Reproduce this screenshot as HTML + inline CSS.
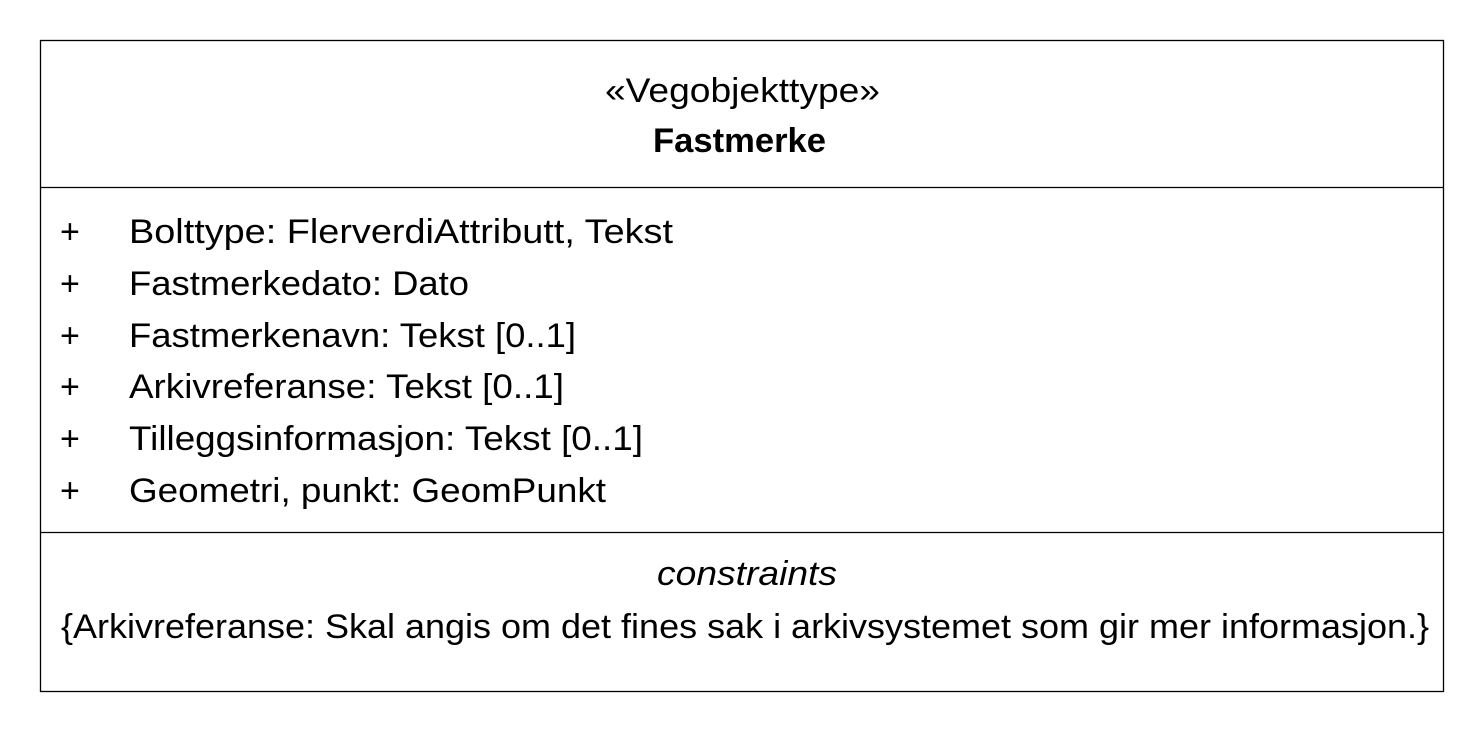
<!DOCTYPE html>
<html><head><meta charset="utf-8"><style>
html,body{margin:0;padding:0;background:#fff;width:1484px;height:732px;overflow:hidden}
svg{display:block}
text{font-family:"Liberation Sans",sans-serif;font-size:34px;fill:#000}
</style></head><body>
<svg width="1484" height="732" viewBox="0 0 1484 732">
<rect x="40.5" y="40.5" width="1403" height="651" fill="#fff" stroke="#000" stroke-width="1.3"/>
<line x1="40" y1="187.5" x2="1443" y2="187.5" stroke="#000" stroke-width="1.3"/>
<line x1="40" y1="532.5" x2="1443" y2="532.5" stroke="#000" stroke-width="1.3"/>
<text x="605" y="102" textLength="275" lengthAdjust="spacingAndGlyphs">«Vegobjekttype»</text>
<text x="653" y="152" textLength="173" lengthAdjust="spacingAndGlyphs" font-weight="bold">Fastmerke</text>
<g>
<text x="60" y="243" font-size="34">+</text><text x="129" y="243" textLength="544" lengthAdjust="spacingAndGlyphs">Bolttype: FlerverdiAttributt, Tekst</text>
<text x="60" y="295">+</text><text x="129" y="295" textLength="340" lengthAdjust="spacingAndGlyphs">Fastmerkedato: Dato</text>
<text x="60" y="347">+</text><text x="129" y="347" textLength="447" lengthAdjust="spacingAndGlyphs">Fastmerkenavn: Tekst [0..1]</text>
<text x="60" y="398">+</text><text x="129" y="398" textLength="435" lengthAdjust="spacingAndGlyphs">Arkivreferanse: Tekst [0..1]</text>
<text x="60" y="450">+</text><text x="129" y="450" textLength="514" lengthAdjust="spacingAndGlyphs">Tilleggsinformasjon: Tekst [0..1]</text>
<text x="60" y="502">+</text><text x="129" y="502" textLength="477" lengthAdjust="spacingAndGlyphs">Geometri, punkt: GeomPunkt</text>
</g>
<text x="657" y="585" textLength="180" lengthAdjust="spacingAndGlyphs" font-style="italic">constraints</text>
<text x="61" y="638" textLength="1368" lengthAdjust="spacingAndGlyphs">{Arkivreferanse: Skal angis om det fines sak i arkivsystemet som gir mer informasjon.}</text>
</svg>
</body></html>
